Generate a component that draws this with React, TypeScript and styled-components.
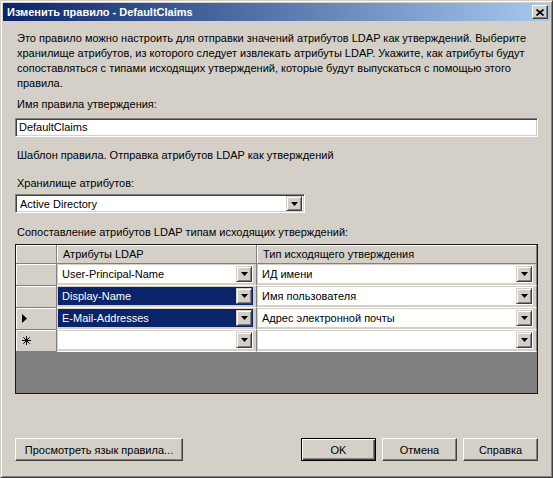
import React from 'react';
import styled, { createGlobalStyle } from 'styled-components';

const GlobalStyle = createGlobalStyle`
  html, body {
    margin: 0;
    padding: 0;
    background: #d4d0c8;
  }
  body {
    font-family: "Liberation Sans", Arial, sans-serif;
    font-size: 11px;
    color: #000;
  }
`;

interface Mapping {
  id: number;
  ldap: string;
  claim: string;
  selected: boolean;
  marker: 'none' | 'current' | 'new';
}

const rows: Mapping[] = [
  { id: 1, ldap: 'User-Principal-Name', claim: 'ИД имени', selected: false, marker: 'none' },
  { id: 2, ldap: 'Display-Name', claim: 'Имя пользователя', selected: true, marker: 'none' },
  { id: 3, ldap: 'E-Mail-Addresses', claim: 'Адрес электронной почты', selected: true, marker: 'current' },
  { id: 4, ldap: '', claim: '', selected: false, marker: 'new' },
];

const DropArrow = () => (
  <svg width='7' height='4' viewBox='0 0 7 4'>
    <path d='M0 0h7L3.5 4z' fill='#000' />
  </svg>
);

const DropButton: React.FC<{ $h?: number }> = ({ $h }) => (
  <ArrowBox $h={$h}>
    <DropArrow />
  </ArrowBox>
);

const RowMarker: React.FC<{ kind: Mapping['marker'] }> = ({ kind }) => {
  if (kind === 'current') {
    return (
      <svg width='5' height='9' viewBox='0 0 5 9'>
        <path d='M0 0l5 4.5L0 9z' fill='#000' />
      </svg>
    );
  }
  if (kind === 'new') {
    return (
      <svg width='9' height='9' viewBox='0 0 9 9'>
        <path d='M4.5 0v9M0 4.5h9M1.3 1.3l6.4 6.4M7.7 1.3L1.3 7.7' stroke='#000' strokeWidth='1' />
      </svg>
    );
  }
  return null;
};

const App: React.FC = () => {
  return (
    <>
      <GlobalStyle />
      <Window>
        <TitleBar>
          <TitleText>Изменить правило - DefaultClaims</TitleText>
          <CloseButton>
            <svg width='8' height='7' viewBox='0 0 8 7'>
              <path d='M0.5 0.5l7 6M7.5 0.5l-7 6' stroke='#000' strokeWidth='1.6' />
            </svg>
          </CloseButton>
        </TitleBar>

        <Body>
          <Intro>
            Это правило можно настроить для отправки значений атрибутов LDAP как утверждений. Выберите
            хранилище атрибутов, из которого следует извлекать атрибуты LDAP. Укажите, как атрибуты будут
            сопоставляться с типами исходящих утверждений, которые будут выпускаться с помощью этого
            правила.
          </Intro>

          <Label $mt={6}>Имя правила утверждения:</Label>
          <TextBox $mt={7}>DefaultClaims</TextBox>

          <Label $mt={11}>Шаблон правила. Отправка атрибутов LDAP как утверждений</Label>

          <Label $mt={14}>Хранилище атрибутов:</Label>
          <Select $mt={4}>
            <span>Active Directory</span>
            <DropButton $h={15} />
          </Select>

          <Label $mt={12}>Сопоставление атрибутов LDAP типам исходящих утверждений:</Label>
          <Grid>
            <HeaderCell $first />
            <HeaderCell>Атрибуты LDAP</HeaderCell>
            <HeaderCell>Тип исходящего утверждения</HeaderCell>
            {rows.map((row) => (
              <React.Fragment key={row.id}>
                <RowHeader>
                  <RowMarker kind={row.marker} />
                </RowHeader>
                <Cell>
                  <Combo $selected={row.selected}>
                    <span>{row.ldap}</span>
                    <DropButton />
                  </Combo>
                </Cell>
                <Cell>
                  <Combo $selected={false}>
                    <span>{row.claim}</span>
                    <DropButton />
                  </Combo>
                </Cell>
              </React.Fragment>
            ))}
            <EmptyArea />
          </Grid>

          <Footer>
            <Button $width={168}>Просмотреть язык правила...</Button>
            <RightButtons>
              <Button $width={75} $default>
                OK
              </Button>
              <Button $width={75}>Отмена</Button>
              <Button $width={75}>Справка</Button>
            </RightButtons>
          </Footer>
        </Body>
      </Window>
    </>
  );
};

export default App;

const Window = styled.div`
  box-sizing: border-box;
  width: 553px;
  height: 478px;
  display: flex;
  flex-direction: column;
  padding: 2px;
  background: #d4d0c8;
  border: 1px solid;
  border-color: #d4d0c8 #404040 #404040 #d4d0c8;
  box-shadow: inset 1px 1px #fff, inset -1px -1px #808080;
`;

const TitleBar = styled.div`
  height: 18px;
  flex-shrink: 0;
  display: flex;
  align-items: center;
  justify-content: space-between;
  padding: 0 2px 0 4px;
  background: linear-gradient(to right, #0a246a, #a6caf0);
`;

const TitleText = styled.span`
  color: #fff;
  font-weight: bold;
  font-size: 11px;
  white-space: nowrap;
`;

const CloseButton = styled.div`
  box-sizing: border-box;
  width: 16px;
  height: 14px;
  display: flex;
  align-items: center;
  justify-content: center;
  background: #d4d0c8;
  border: 1px solid;
  border-color: #fff #404040 #404040 #fff;
  box-shadow: inset -1px -1px #808080;
`;

const Body = styled.div`
  flex: 1;
  display: flex;
  flex-direction: column;
  padding: 0 12px;
`;

const Intro = styled.p`
  margin: 10px 0 0 2px;
  line-height: 15px;
`;

const Label = styled.div<{ $mt: number }>`
  margin: ${(p) => p.$mt}px 0 0 2px;
  line-height: 14px;
  white-space: nowrap;
`;

const sunken = `
  box-sizing: border-box;
  background: #fff;
  border: 1px solid;
  border-color: #808080 #fff #fff #808080;
  box-shadow: inset 1px 1px #404040, inset -1px -1px #d4d0c8;
`;

const TextBox = styled.div<{ $mt: number }>`
  ${sunken}
  margin-top: ${(p) => p.$mt}px;
  height: 19px;
  padding: 0 3px;
  line-height: 17px;
`;

const Select = styled.div<{ $mt: number }>`
  ${sunken}
  margin-top: ${(p) => p.$mt}px;
  width: 290px;
  height: 19px;
  display: flex;
  align-items: center;
  justify-content: space-between;
  padding: 0 2px 0 4px;
`;

const ArrowBox = styled.div<{ $h?: number }>`
  box-sizing: border-box;
  width: 16px;
  height: ${(p) => p.$h ?? 16}px;
  flex-shrink: 0;
  display: flex;
  align-items: center;
  justify-content: center;
  background: #d4d0c8;
  border: 1px solid;
  border-color: #d4d0c8 #404040 #404040 #d4d0c8;
  box-shadow: inset 1px 1px #fff, inset -1px -1px #808080;
`;

const Grid = styled.div`
  box-sizing: border-box;
  margin-top: 5px;
  height: 150px;
  display: grid;
  grid-template-columns: 41px 200px 1fr;
  grid-template-rows: 19px repeat(4, 22px) 1fr;
  background: #808080;
  border: 1px solid #1a1a1a;
`;

const HeaderCell = styled.div<{ $first?: boolean }>`
  box-sizing: border-box;
  display: flex;
  align-items: center;
  padding-left: ${(p) => (p.$first ? 0 : 6)}px;
  background: #d4d0c8;
  border-right: 1px solid #808080;
  border-bottom: 1px solid #808080;
  box-shadow: inset 1px 1px #fff;
  white-space: nowrap;
`;

const RowHeader = styled.div`
  box-sizing: border-box;
  display: flex;
  align-items: center;
  padding-left: 6px;
  background: #d4d0c8;
  border-right: 1px solid #808080;
  border-bottom: 1px solid #808080;
  box-shadow: inset 1px 1px #fff;
`;

const Cell = styled.div`
  box-sizing: border-box;
  padding: 1px 3px 2px 1px;
  background: #d4d0c8;
  border-right: 1px solid #808080;
  border-bottom: 1px solid #fff;
`;

const Combo = styled.div<{ $selected: boolean }>`
  box-sizing: border-box;
  height: 100%;
  display: flex;
  align-items: center;
  justify-content: space-between;
  padding: 0 1px 0 4px;
  background: ${(p) => (p.$selected ? '#0a246a' : '#fff')};
  color: ${(p) => (p.$selected ? '#fff' : '#000')};
  white-space: nowrap;
`;

const EmptyArea = styled.div`
  grid-column: 1 / -1;
  background: #808080;
`;

const Footer = styled.div`
  margin-top: 44px;
  display: flex;
  justify-content: space-between;
`;

const RightButtons = styled.div`
  display: flex;
  gap: 6px;
`;

const Button = styled.div<{ $width: number; $default?: boolean }>`
  box-sizing: border-box;
  width: ${(p) => p.$width}px;
  height: 23px;
  display: flex;
  align-items: center;
  justify-content: center;
  background: #d4d0c8;
  border: 1px solid;
  border-color: ${(p) => (p.$default ? '#000' : '#fff #404040 #404040 #fff')};
  box-shadow: ${(p) =>
    p.$default
      ? 'inset 1px 1px #fff, inset -1px -1px #404040, inset -2px -2px #808080'
      : 'inset -1px -1px #808080'};
  white-space: nowrap;
`;
